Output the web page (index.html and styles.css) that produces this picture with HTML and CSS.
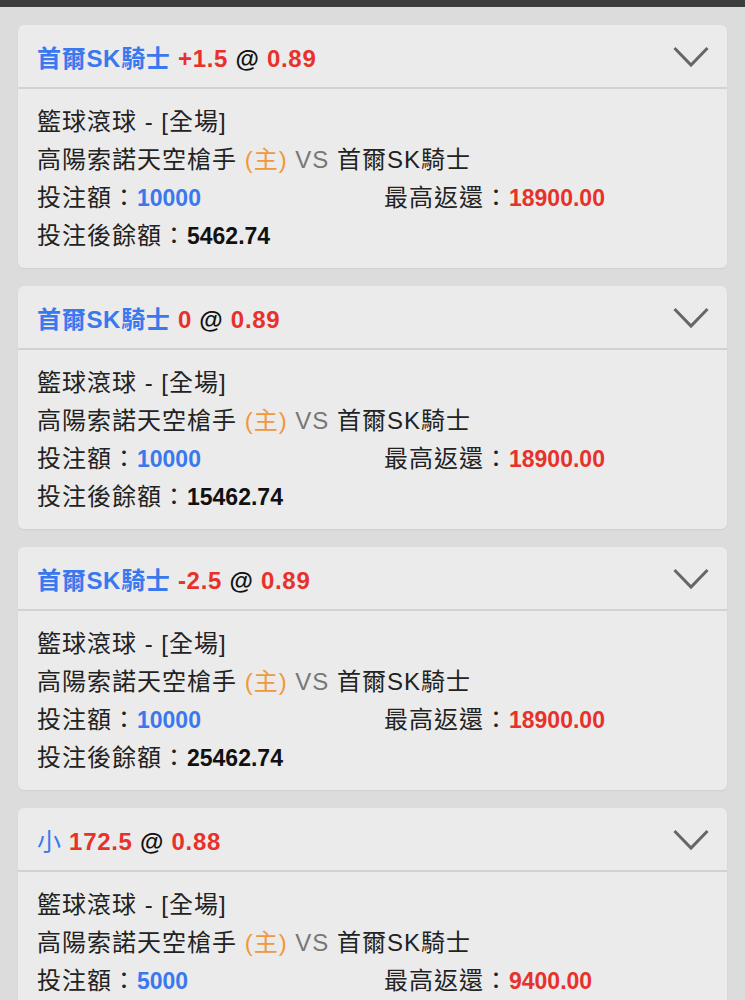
FILE: index.html
```html
<!DOCTYPE html>
<html lang="zh-Hant">
<head>
    <meta charset="UTF-8">
    <meta name="viewport" content="width=device-width, initial-scale=1.0">
    <title>注單</title>
    <link rel="stylesheet" href="styles.css">
</head>
<body>
    <div class="top-bar"></div>

    <div class="bet-list">
        <div class="bet-card">
            <div class="bet-head">
                <div class="bet-title"><span class="pick">首爾SK騎士</span> <span class="red">+1.5</span> @ <span class="red">0.89</span></div>
                <svg class="chevron" width="36" height="22" viewBox="0 0 36 22"><path d="M1.5 2 L18 19 L34.5 2" fill="none" stroke="#666" stroke-width="3"/></svg>
            </div>
            <div class="bet-body">
                <div class="line">籃球滾球 - [全場]</div>
                <div class="line">高陽索諾天空槍手 <span class="home">(主)</span> <span class="vs">VS</span> 首爾SK騎士</div>
                <div class="line row">
                    <div>投注額：<span class="amount">10000</span></div>
                    <div>最高返還：<span class="return">18900.00</span></div>
                </div>
                <div class="line">投注後餘額：<span class="balance">5462.74</span></div>
            </div>
        </div>

        <div class="bet-card">
            <div class="bet-head">
                <div class="bet-title"><span class="pick">首爾SK騎士</span> <span class="red">0</span> @ <span class="red">0.89</span></div>
                <svg class="chevron" width="36" height="22" viewBox="0 0 36 22"><path d="M1.5 2 L18 19 L34.5 2" fill="none" stroke="#666" stroke-width="3"/></svg>
            </div>
            <div class="bet-body">
                <div class="line">籃球滾球 - [全場]</div>
                <div class="line">高陽索諾天空槍手 <span class="home">(主)</span> <span class="vs">VS</span> 首爾SK騎士</div>
                <div class="line row">
                    <div>投注額：<span class="amount">10000</span></div>
                    <div>最高返還：<span class="return">18900.00</span></div>
                </div>
                <div class="line">投注後餘額：<span class="balance">15462.74</span></div>
            </div>
        </div>

        <div class="bet-card">
            <div class="bet-head">
                <div class="bet-title"><span class="pick">首爾SK騎士</span> <span class="red">-2.5</span> @ <span class="red">0.89</span></div>
                <svg class="chevron" width="36" height="22" viewBox="0 0 36 22"><path d="M1.5 2 L18 19 L34.5 2" fill="none" stroke="#666" stroke-width="3"/></svg>
            </div>
            <div class="bet-body">
                <div class="line">籃球滾球 - [全場]</div>
                <div class="line">高陽索諾天空槍手 <span class="home">(主)</span> <span class="vs">VS</span> 首爾SK騎士</div>
                <div class="line row">
                    <div>投注額：<span class="amount">10000</span></div>
                    <div>最高返還：<span class="return">18900.00</span></div>
                </div>
                <div class="line">投注後餘額：<span class="balance">25462.74</span></div>
            </div>
        </div>

        <div class="bet-card">
            <div class="bet-head">
                <div class="bet-title"><span class="pick light">小</span> <span class="red">172.5</span> @ <span class="red">0.88</span></div>
                <svg class="chevron" width="36" height="22" viewBox="0 0 36 22"><path d="M1.5 2 L18 19 L34.5 2" fill="none" stroke="#666" stroke-width="3"/></svg>
            </div>
            <div class="bet-body">
                <div class="line">籃球滾球 - [全場]</div>
                <div class="line">高陽索諾天空槍手 <span class="home">(主)</span> <span class="vs">VS</span> 首爾SK騎士</div>
                <div class="line row">
                    <div>投注額：<span class="amount">5000</span></div>
                    <div>最高返還：<span class="return">9400.00</span></div>
                </div>
                <div class="line">投注後餘額：<span class="balance">462.74</span></div>
            </div>
        </div>
    </div>
</body>
</html>
```

FILE: styles.css
```css
body {
    font-family: "Liberation Sans", "Noto Sans CJK TC", sans-serif;
    margin: 0;
    padding: 0;
    background-color: #dcdcdc;
    color: #222;
}

.top-bar {
    height: 7px;
    background-color: #3d3d3d;
}

.bet-list {
    display: flex;
    flex-direction: column;
    gap: 18px;
    padding: 18px 18px 0 18px;
}

.bet-card {
    background-color: #ebebeb;
    border-radius: 6px;
    box-shadow: 0 1px 2px rgba(0, 0, 0, 0.06);
    overflow: hidden;
}

.bet-head {
    display: flex;
    justify-content: space-between;
    align-items: center;
    height: 62px;
    padding: 0 18px 0 19px;
    border-bottom: 2px solid #d2d2d2;
}

.bet-title {
    font-size: 24px;
    font-weight: bold;
    letter-spacing: 0.7px;
    color: #111;
}

.bet-title .pick {
    color: #3a78ee;
}

.bet-title .pick.light {
    font-weight: normal;
}

.red {
    color: #e8312a;
}

.chevron {
    display: block;
    margin-top: 2px;
}

.bet-body {
    padding: 14px 19px 13px 19px;
    font-size: 24px;
    letter-spacing: 1px;
}

.line {
    height: 38px;
    line-height: 38px;
    white-space: nowrap;
}

.row {
    display: grid;
    grid-template-columns: 347px 1fr;
}

.home {
    color: #f0983c;
}

.vs {
    color: #777;
}

.amount,
.return,
.balance {
    font-size: 23px;
    font-weight: bold;
    letter-spacing: 0;
}

.amount {
    color: #3a78ee;
}

.return {
    color: #e8312a;
}

.balance {
    color: #111;
}
```
